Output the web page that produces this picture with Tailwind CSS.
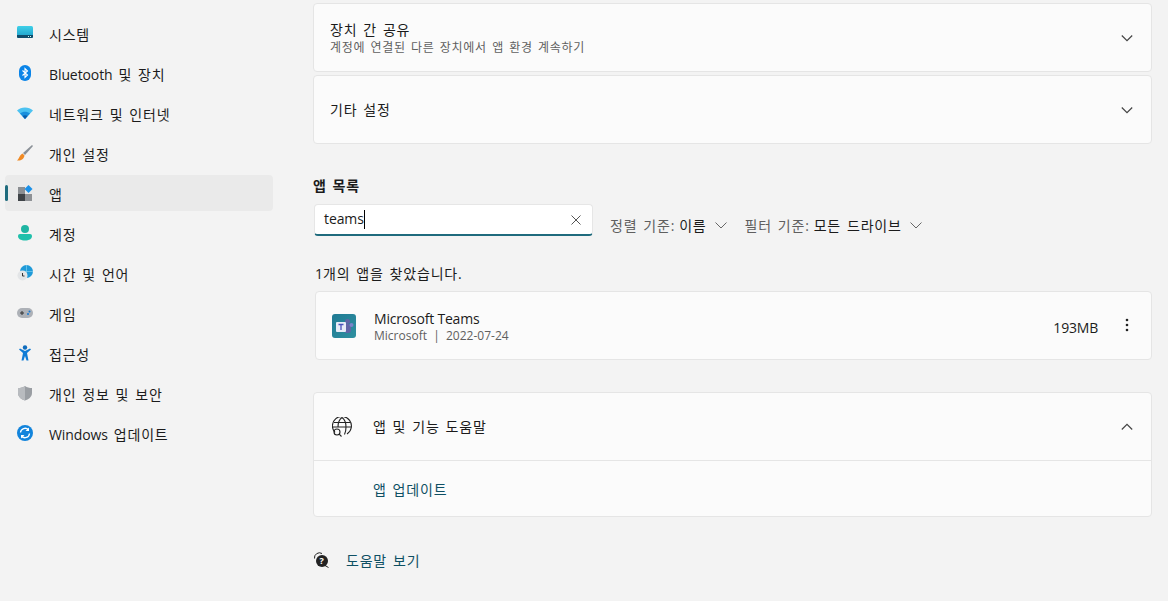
<!DOCTYPE html>
<html lang="ko">
<head>
<meta charset="UTF-8">
<title>앱 및 기능</title>
<script src="https://cdn.jsdelivr.net/npm/@tailwindcss/browser@4"></script>
</head>
<body class="bg-[#f3f3f3] text-[#1b1b1b] font-['Open_Sans','Noto_Sans_CJK_KR',sans-serif] text-[14px] tracking-[0.8px] [word-spacing:1.5px] overflow-hidden">
<div class="w-[1168px] h-[601px] flex overflow-hidden">

  <!-- sidebar -->
  <nav class="w-[313px] shrink-0 pt-[15px] pl-[5px] pr-[40px] flex flex-col gap-[4px] [&_a>span]:mt-[2px]">
    <a class="h-[36px] flex items-center pl-[12px] gap-[16px]">
      <svg class="w-[16px] h-[16px]" viewBox="0 0 16 16"><defs><linearGradient id="sys" x1="0" y1="0" x2="0" y2="1"><stop offset="0" stop-color="#3fd0e8"/><stop offset="1" stop-color="#1a9cc8"/></linearGradient></defs><rect y="1" width="16" height="12" rx="1.500" fill="url(#sys)"/><path d="M0 10h16v1.500a1.500 1.500 0 0 1-1.500 1.500h-13a1.500 1.500 0 0 1-1.500-1.500z" fill="#0f4c6b"/><path d="M11 11.500h1M13 11.500h1" stroke="#cfe" stroke-width="1"/></svg>
      <span>시스템</span>
    </a>
    <a class="h-[36px] flex items-center pl-[12px] gap-[16px]">
      <svg class="w-[16px] h-[16px]" viewBox="0 0 16 16"><rect x="2" y="0" width="12" height="16" rx="6" fill="#0a84e8"/><path d="M5.500 5.500 10.500 10 8 12.500V3.500L10.500 6 5.500 10.500" fill="none" stroke="#fff" stroke-width="1.100"/></svg>
      <span><b class="font-normal tracking-[-0.1px]">Bluetooth</b> 및 장치</span>
    </a>
    <a class="h-[36px] flex items-center pl-[12px] gap-[16px]">
      <svg class="w-[16px] h-[16px]" viewBox="0 0 16 16"><path d="M0 5.500C4 1.500 12 1.500 16 5.500L8 14z" fill="#4cc2f1"/><path d="M3 8.500C6 6 10 6 13 8.500L8 14z" fill="#1a8fdc"/><path d="M5.500 11C7 10 9 10 10.500 11L8 14z" fill="#0b5cab"/></svg>
      <span>네트워크 및 인터넷</span>
    </a>
    <a class="h-[36px] flex items-center pl-[12px] gap-[16px]">
      <svg class="w-[16px] h-[16px]" viewBox="0 0 16 16"><path d="M15 0 16 1 8 10 6 8z" fill="#8a9097"/><path d="M5.500 8.500 7.500 10.500C7 14 4 16 0 15.500 2 14 2.500 10 5.500 8.500z" fill="#f08a24"/></svg>
      <span>개인 설정</span>
    </a>
    <a class="relative h-[36px] flex items-center pl-[12px] gap-[16px] bg-[#eaeaea] rounded-[4px]">
      <span class="absolute left-0 top-[8px] w-[3px] h-[16px] rounded-full bg-[#1f6b7d]"></span>
      <svg class="w-[16px] h-[16px]" viewBox="0 0 16 16"><rect x="1" y="2" width="7" height="7" fill="#8b8e92"/><rect x="1" y="9" width="7" height="7" fill="#3f4347"/><rect x="8" y="9" width="7" height="7" fill="#8f9296"/><path d="M11.500 0 15.500 4 11.500 8 7.500 4z" fill="#1a90e8"/></svg>
      <span>앱</span>
    </a>
    <a class="h-[36px] flex items-center pl-[12px] gap-[16px]">
      <svg class="w-[16px] h-[16px]" viewBox="0 0 16 16"><circle cx="8" cy="4" r="4" fill="#1fb5a3"/><path d="M1 11a2 2 0 0 1 2-2h10a2 2 0 0 1 2 2c0 3-3 4.500-7 4.500S1 14 1 11z" fill="#1fc0ab"/></svg>
      <span>계정</span>
    </a>
    <a class="h-[36px] flex items-center pl-[12px] gap-[16px]">
      <svg class="w-[16px] h-[16px]" viewBox="0 0 16 16"><circle cx="9.500" cy="6.500" r="6.500" fill="#1f9ad8"/><path d="M9.500 0v13M3 6.500h13" stroke="#7fd0ee" stroke-width=".7"/><circle cx="5.500" cy="10.500" r="5" fill="#e3e5e7"/><path d="M5.500 8v3h2" fill="none" stroke="#333" stroke-width="1"/></svg>
      <span>시간 및 언어</span>
    </a>
    <a class="h-[36px] flex items-center pl-[12px] gap-[16px]">
      <svg class="w-[16px] h-[16px]" viewBox="0 0 16 16"><rect y="3" width="16" height="10" rx="5" fill="#adb1b7"/><path d="M3 8h4M5 6v4" stroke="#333" stroke-width="1"/><circle cx="11" cy="9" r="1" fill="#1a78d0"/><circle cx="12.500" cy="6.500" r="1" fill="#1a78d0"/></svg>
      <span>게임</span>
    </a>
    <a class="h-[36px] flex items-center pl-[12px] gap-[16px]">
      <svg class="w-[16px] h-[16px]" viewBox="0 0 16 16"><circle cx="8" cy="2.500" r="2.200" fill="#0f6cbd"/><path d="M2 4.500 3 3.500 8 6 13 3.500 14 4.500 10 8 11.500 15.500H9.500L8 11 6.500 15.500H4.500L6 8z" fill="#0f7cd6"/></svg>
      <span>접근성</span>
    </a>
    <a class="h-[36px] flex items-center pl-[12px] gap-[16px]">
      <svg class="w-[16px] h-[16px]" viewBox="0 0 16 16"><path d="M8 1C10 2.500 12.500 3 15 3V8C15 12 11.500 14.500 8 15.500 4.500 14.500 1 12 1 8V3C3.500 3 6 2.500 8 1z" fill="#9a9ea3"/><path d="M8 1V15.500C4.500 14.500 1 12 1 8V3C3.500 3 6 2.500 8 1z" fill="#b8bbbf"/></svg>
      <span>개인 정보 및 보안</span>
    </a>
    <a class="h-[36px] flex items-center pl-[12px] gap-[16px]">
      <svg class="w-[16px] h-[16px]" viewBox="0 0 16 16"><circle cx="8" cy="8" r="8" fill="#1284dc"/><path d="M3.500 7.500A4.500 4.500 0 0 1 11.500 5M12.500 8.500A4.500 4.500 0 0 1 4.500 11" fill="none" stroke="#fff" stroke-width="1.300"/><path d="M12 2.500V6H8.500zM4 13.500V10H7.500z" fill="#fff"/></svg>
      <span><b class="font-normal tracking-[-0.1px]">Windows</b> 업데이트</span>
    </a>
  </nav>

  <!-- main -->
  <main class="w-[839px] pt-[3px]">
    <div class="flex flex-col gap-[3px]">
      <div class="h-[69px] bg-[#fbfbfb] border border-[#e5e5e5] rounded-[4px] pl-[16px] pr-[18px] flex items-center justify-between">
        <div class="flex flex-col">
          <span class="leading-[16px] mt-[2px]">장치 간 공유</span>
          <span class="mt-[2px] text-[12px] leading-[16px] text-[#5f5f5f] tracking-[0.7px]">계정에 연결된 다른 장치에서 앱 환경 계속하기</span>
        </div>
        <svg class="w-[12px] h-[12px]" viewBox="0 0 12 12"><path d="M.8 3.500 6 8.700 11.200 3.500" fill="none" stroke="#444" stroke-width="1.200"/></svg>
      </div>
      <div class="h-[69px] bg-[#fbfbfb] border border-[#e5e5e5] rounded-[4px] pl-[16px] pr-[18px] flex items-center justify-between">
        <span>기타 설정</span>
        <svg class="w-[12px] h-[12px]" viewBox="0 0 12 12"><path d="M.8 3.500 6 8.700 11.200 3.500" fill="none" stroke="#444" stroke-width="1.200"/></svg>
      </div>
    </div>

    <h2 class="mt-[32px] leading-[20px] font-bold">앱 목록</h2>

    <div class="mt-[8px] flex items-end">
      <div class="ml-px w-[279px] h-[32px] bg-white border border-[#e6e6e6] border-b-2 border-b-[#1f6b7d] rounded-[4px] pl-[9px] pr-[11px] flex items-center justify-between">
        <span class="flex items-center tracking-[-0.1px] leading-[18px]"><span class="-mt-[2px]">teams</span><span class="w-px h-[19px] bg-black"></span></span>
        <svg class="w-[10px] h-[10px]" viewBox="0 0 10 10"><path d="M.5.500l9 9M9.500.500l-9 9" stroke="#555" stroke-width="1"/></svg>
      </div>
      <div class="ml-[17px] h-[22px] flex items-center text-[#1b1b1b]">
        <span class="text-[#5f5f5f]">정렬 기준:</span><span class="ml-[4px]">이름</span>
        <svg class="ml-[8px] w-[12px] h-[12px]" viewBox="0 0 12 12"><path d="M.5 3.500 6 9 11.500 3.500" fill="none" stroke="#666" stroke-width="1"/></svg>
        <span class="ml-[18px] text-[#5f5f5f]">필터 기준:</span><span class="ml-[4px]">모든 드라이브</span>
        <svg class="ml-[8px] w-[12px] h-[12px]" viewBox="0 0 12 12"><path d="M.5 3.500 6 9 11.500 3.500" fill="none" stroke="#666" stroke-width="1"/></svg>
      </div>
    </div>

    <p class="mt-[28px] ml-[2px] leading-[20px]"><span class="tracking-normal">1</span>개의 앱을 찾았습니다.</p>

    <div class="mt-[7px] ml-[2px] h-[69px] bg-[#fbfbfb] border border-[#e5e5e5] rounded-[4px] pl-[16px] pr-[22px] flex items-center">
      <svg class="w-[24px] h-[24px]" viewBox="0 0 24 24"><defs><linearGradient id="tm" x1="0" y1="0" x2="1" y2="1"><stop offset="0" stop-color="#1f7a94"/><stop offset="1" stop-color="#2f90a0"/></linearGradient></defs><rect width="24" height="24" rx="3" fill="url(#tm)"/><circle cx="15.500" cy="7.500" r="2.500" fill="#6264a7"/><rect x="12" y="10" width="7" height="9" rx="3" fill="#6264a7"/><circle cx="19.500" cy="11" r="2" fill="#7b83c9"/><rect x="4" y="8" width="10" height="10" rx="1" fill="#e8ecf8"/><path d="M6.500 10.500h5M9 10.500v5.500" stroke="#4b53bc" stroke-width="1.300"/></svg>
      <div class="ml-[18px] pt-[3px] flex flex-col tracking-normal [word-spacing:0]">
        <span class="leading-[16px] tracking-[-0.2px]">Microsoft Teams</span>
        <span class="mt-px text-[12px] leading-[16px] text-[#5f5f5f]">Microsoft&nbsp; | &nbsp;2022-07-24</span>
      </div>
      <span class="ml-auto tracking-[-0.2px] mt-[3px]">193MB</span>
      <svg class="ml-[27px] w-[4px] h-[14px] mb-[2px]" viewBox="0 0 4 14"><circle cx="2" cy="2" r="1.300" fill="#222"/><circle cx="2" cy="7" r="1.300" fill="#222"/><circle cx="2" cy="12" r="1.300" fill="#222"/></svg>
    </div>

    <div class="mt-[32px] h-[125px] bg-[#fbfbfb] border border-[#e5e5e5] rounded-[4px] flex flex-col">
      <div class="h-[68px] border-b border-[#e5e5e5] pl-[18px] pr-[18px] flex items-center">
        <svg class="w-[20px] h-[20px]" viewBox="0 0 20 20" fill="none" stroke="#222" stroke-width="1.100"><path d="M3 15.500A9.500 9.500 0 1 1 15 17"/><path d="M.7 10h18.600M10 .5C6.500 3 6 6.500 6 10M10 .5c3.500 2.500 4 6 4 9.500 0 2.500-.3 5-1.500 7.500M1.800 5.500h16.400"/><circle cx="5" cy="15" r="3"/><path d="M7.200 17.200 9.500 19.500"/></svg>
        <span class="ml-[21px]">앱 및 기능 도움말</span>
        <svg class="ml-auto w-[12px] h-[12px]" viewBox="0 0 12 12"><path d="M.8 8.500 6 3.300 11.200 8.500" fill="none" stroke="#444" stroke-width="1.200"/></svg>
      </div>
      <a class="pl-[59px] pt-[19px] leading-[20px] text-[#0e4f63]">앱 업데이트</a>
    </div>

    <a class="mt-[33px] flex items-center h-[20px] text-[#0e4f63]">
      <svg class="w-[16px] h-[16px]" viewBox="0 0 16 16"><path d="M1.500 6.500A5 5 0 0 1 9 1.500" fill="none" stroke="#222" stroke-width="1"/><circle cx="9" cy="9" r="6" fill="#222"/><path d="M12 13.500 15.500 15.500" stroke="#222" stroke-width="1"/><text x="9" y="12" text-anchor="middle" font-size="9" font-weight="700" fill="#fff">?</text></svg>
      <span class="ml-[17px]">도움말 보기</span>
    </a>
  </main>
</div>
</body>
</html>
